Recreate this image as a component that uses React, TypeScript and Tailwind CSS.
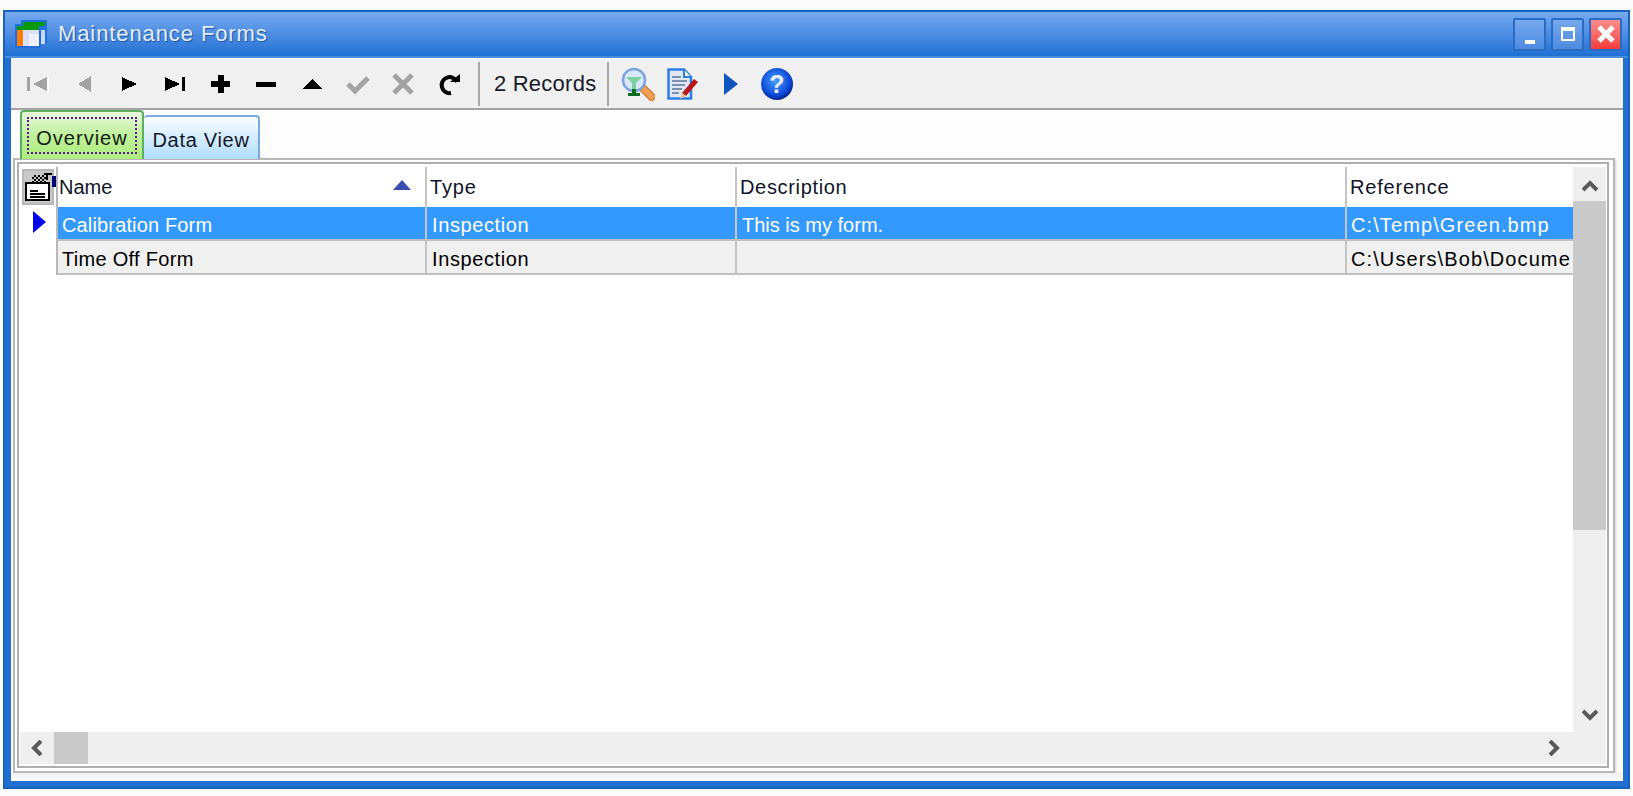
import React from 'react';

const dim = '#a3a3a3';
const ink = '#000000';

const ToolIcon = ({ children }: { children: React.ReactNode }) => (
  <div className="w-[45.7px] h-full flex items-center justify-center flex-shrink-0">
    <svg width="26" height="26" viewBox="0 0 26 26" shapeRendering="crispEdges">{children}</svg>
  </div>
);

const Chevron = ({ dir }: { dir: 'up' | 'down' | 'left' | 'right' }) => {
  const rot = { up: 0, down: 180, left: 270, right: 90 }[dir];
  return (
    <svg width="16" height="14" viewBox="0 0 16 14" style={{ transform: `rotate(${rot}deg)` }}>
      <path d="M1 11 L8 4 L15 11" fill="none" stroke="#5a5a5a" strokeWidth="4" />
    </svg>
  );
};

const rows = [
  {
    name: 'Calibration Form',
    nameCls: 'tracking-[0.15px]',
    type: 'Inspection',
    desc: 'This is my form.',
    ref: 'C:\\Temp\\Green.bmp',
    selected: true,
  },
  {
    name: 'Time Off Form',
    nameCls: 'tracking-[0.3px]',
    type: 'Inspection',
    desc: '',
    ref: 'C:\\Users\\Bob\\Docume',
    selected: false,
  },
];

const gridCols = 'grid grid-cols-[369px_310px_610px_225px]';

// dither cells on the form icon in the grid corner
const dither = [
  [10, 3], [14, 3], [18, 3],
  [8, 5], [12, 5], [16, 5], [20, 5],
  [10, 7], [14, 7], [18, 7],
  [8, 9], [12, 9], [16, 9], [20, 9],
];

export default function App() {
  return (
    <div className="w-[1633px] h-[796px] bg-[#fbfbfb] pt-[10px] pl-[3px] pr-[3px] pb-[7px] overflow-hidden font-['Liberation_Sans',sans-serif]">
      <div className="h-full flex flex-col bg-[#1f6fd3] border-2 border-[#1b62bd]">
        {/* title bar */}
        <div className="h-[46px] flex-shrink-0 flex items-center justify-between bg-gradient-to-b from-[#75a9ef] to-[#1e70d4] pl-[10px] pr-[6px] border-b-[2px] border-[#4a8ce0]">
          <div className="flex items-center gap-[11px]">
            <svg width="32" height="28" viewBox="0 0 32 28" shapeRendering="crispEdges">
              <rect x="6" y="0" width="26" height="24" fill="#1f6fe0" />
              <rect x="0" y="4" width="26" height="24" fill="#1f6fe0" />
              <rect x="8" y="2" width="22" height="4" fill="#0a9a10" />
              <rect x="2" y="6" width="22" height="4" fill="#0a9a10" />
              <rect x="26" y="10" width="4" height="14" fill="#c8d8f8" />
              <rect x="2" y="10" width="6" height="16" fill="#ff7a00" />
              <rect x="8" y="10" width="16" height="16" fill="#d8e0fc" />
              <rect x="14" y="14" width="10" height="12" fill="#eef0ff" />
            </svg>
            <span className="text-[22px] tracking-[0.9px] text-[#e4effd] leading-none [text-shadow:1px_1px_1px_#1a55a8]">Maintenance Forms</span>
          </div>
          <div className="flex items-center gap-[5px]">
            <div className="w-[33px] h-[33px] rounded-[2px] border-2 border-[#2a6cc4] bg-gradient-to-b from-[#75a8ee] to-[#4d8ae0] flex items-end justify-center pb-[5px]">
              <div className="w-[10px] h-[4px] bg-white" />
            </div>
            <div className="w-[33px] h-[33px] rounded-[2px] border-2 border-[#2a6cc4] bg-gradient-to-b from-[#75a8ee] to-[#4d8ae0] flex items-center justify-center">
              <div className="w-[14px] h-[14px] border-2 border-t-[4px] border-white" />
            </div>
            <div className="w-[33px] h-[33px] rounded-[2px] border-2 border-[#2a6cc4] bg-gradient-to-b from-[#fb8d8d] to-[#f43a3a] flex items-center justify-center">
              <svg width="20" height="20" viewBox="0 0 20 20">
                <path d="M3 3 L17 17 M17 3 L3 17" stroke="#fff" strokeWidth="5" />
              </svg>
            </div>
          </div>
        </div>

        {/* client */}
        <div className="flex-1 min-h-0 ml-[6px] mr-[5px] mb-[6px] bg-[#fdfdfd] flex flex-col">
          {/* toolbar */}
          <div className="h-[52px] flex-shrink-0 bg-[#f0f0f0] border-t border-white border-b-[2px] border-b-[#a3a3a3] flex items-center pl-[4px]">
            <ToolIcon>
              <rect x="2" y="6" width="3" height="14" fill={dim} />
              <polygon points="22,6 22,20 8,13" fill={dim} />
              <rect x="22" y="6" width="2" height="15" fill="#fff" />
            </ToolIcon>
            <ToolIcon>
              <polygon points="20,5 20,21 7,13" fill={dim} />
            </ToolIcon>
            <ToolIcon>
              <polygon points="6,6 6,20 21,13" fill={ink} />
            </ToolIcon>
            <ToolIcon>
              <polygon points="3,6 3,20 18,13" fill={ink} />
              <rect x="20" y="6" width="3" height="14" fill={ink} />
            </ToolIcon>
            <ToolIcon>
              <rect x="3" y="10" width="19" height="6" fill={ink} />
              <rect x="10" y="4" width="6" height="18" fill={ink} />
            </ToolIcon>
            <ToolIcon>
              <rect x="3" y="11" width="20" height="5" fill={ink} />
            </ToolIcon>
            <ToolIcon>
              <polygon points="3,18 23,18 13,8" fill={ink} />
            </ToolIcon>
            <ToolIcon>
              <path d="M3 13 L10 20 L23 7" fill="none" stroke={dim} strokeWidth="5" shapeRendering="auto" />
            </ToolIcon>
            <ToolIcon>
              <path d="M4 4 L22 22 M22 4 L4 22" fill="none" stroke={dim} strokeWidth="5" shapeRendering="auto" />
            </ToolIcon>
            <ToolIcon>
              <path d="M21 11 A8 8 0 1 0 15 22" fill="none" stroke={ink} strokeWidth="4" shapeRendering="auto" />
              <polygon points="14,11 24,11 24,3" fill={ink} shapeRendering="auto" />
            </ToolIcon>
            <div className="w-[2px] h-[44px] bg-[#a8a8a8] ml-[6px] flex-shrink-0" />
            <span className="ml-[14px] w-[113px] text-[22px] tracking-[0.25px] leading-none text-[#1a1a2a] whitespace-nowrap">2 Records</span>
            <div className="w-[2px] h-[44px] bg-[#a8a8a8] flex-shrink-0" />
            <svg className="ml-[12px]" width="34" height="34" viewBox="0 0 34 34">
              <rect x="21" y="20" width="7" height="16" transform="rotate(-45 24 24)" fill="#f0a050" stroke="#c06a20" />
              <circle cx="13" cy="13" r="11" fill="#d8e8fb" stroke="#7da4dc" strokeWidth="2.5" />
              <path d="M5 10 H21 L15 16 V24 H11 V16 Z" fill="#7fd0a0" />
              <rect x="7" y="26" width="12" height="3" fill="#0a6a20" />
              <rect x="11" y="22" width="4" height="5" fill="#0a6a20" />
            </svg>
            <svg className="ml-[12px]" width="32" height="32" viewBox="0 0 32 32">
              <path d="M1.5 1.5 H17 L24 9 V30.5 H1.5 Z" fill="#dfe8f6" stroke="#2a7de8" strokeWidth="2.5" />
              <path d="M17 1.5 V9 H24" fill="#fff" stroke="#2a7de8" strokeWidth="2" />
              <path d="M5 9 H14 M5 13 H20 M5 17 H18 M5 21 H15 M5 25 H12" stroke="#7d90b0" strokeWidth="2" />
              <path d="M15 25 L27 11 L31 14 L19 28 Z" fill="#b81818" />
              <path d="M13 31 L15 25 L19 28 Z" fill="#f0c080" />
            </svg>
            <svg className="ml-[24px]" width="16" height="24" viewBox="0 0 16 24">
              <polygon points="1,1 15,12 1,23" fill="#0f55c0" />
            </svg>
            <svg className="ml-[21px]" width="34" height="34" viewBox="0 0 34 34">
              <defs>
                <radialGradient id="helpBall" cx="0.45" cy="0.4" r="0.65">
                  <stop offset="0%" stopColor="#4aa0ff" />
                  <stop offset="70%" stopColor="#0c48d8" />
                  <stop offset="100%" stopColor="#041a70" />
                </radialGradient>
              </defs>
              <circle cx="17" cy="17" r="16" fill="url(#helpBall)" />
              <text x="17" y="26" textAnchor="middle" fontSize="25" fontWeight="700" fill="#e8eefc" fontFamily="Liberation Sans, sans-serif">?</text>
            </svg>
          </div>

          {/* tabs */}
          <div className="h-[49px] flex-shrink-0 flex items-end pl-[9px] relative z-10 -mb-[1px]">
            <div className="w-[124px] h-[49px] rounded-t-[4px] border-2 border-b-0 border-[#5cb25c] bg-gradient-to-b from-[#eaf8de] via-[#bff09a] to-[#aeee7c] p-[5px]">
              <div className="h-full border-2 border-dotted border-[#5a1a90] flex items-center justify-center pt-[5px] text-[20px] tracking-[1px] leading-none text-[#142014]">Overview</div>
            </div>
            <div className="w-[116px] h-[44px] rounded-t-[4px] border-2 border-l-0 border-b-0 border-[#7aa9e2] bg-gradient-to-b from-[#fafdff] to-[#afdcfb] flex items-center justify-center pt-[3px] text-[20px] tracking-[0.7px] leading-none text-[#101828]">Data View</div>
          </div>

          {/* panel */}
          <div className="flex-1 min-h-0 ml-[2px] mr-[8px] border-2 border-[#b8b8b8] bg-white pt-[2px] pl-[2px] pr-[4px] pb-[3px] shadow-[1px_1px_2px_#d0d0d0]">
            <div className="h-full border-2 border-[#adadb2] bg-white flex flex-col pr-[1px] pb-[2px]">
              <div className="flex-1 min-h-0 flex pt-[3px] pl-[3px]">
                {/* row indicators */}
                <div className="w-[34px] flex-shrink-0 flex flex-col items-center pr-[2px]">
                  <div className="mt-[2px] w-[32px] h-[36px] bg-[#c8c8c8] border-[2px] border-[#b8b8b8] flex items-center justify-center relative">
                    <svg width="28" height="30" viewBox="0 0 28 30" shapeRendering="crispEdges">
                      <rect x="2" y="11" width="23" height="17" fill="#fff" stroke="#000" strokeWidth="2" />
                      <path d="M6 19 H14 M6 22 H21 M6 25 H21" stroke="#000" strokeWidth="1.5" />
                      {dither.map(([x, y]) => (
                        <rect key={`${x}-${y}`} x={x} y={y} width="2" height="2" fill="#000" />
                      ))}
                      <rect x="20" y="1" width="8" height="2" fill="#000" />
                      <rect x="22" y="3" width="2" height="5" fill="#000" />
                    </svg>
                    <div className="absolute -right-[4px] top-[5px] w-[4px] h-[11px] bg-[#00007a]" />
                  </div>
                  <svg className="mt-[6px] ml-[2px]" width="13" height="22" viewBox="0 0 13 22">
                    <polygon points="0,0 13,11 0,22" fill="#0000f0" />
                  </svg>
                </div>

                {/* grid */}
                <div className="flex-1 min-w-0 flex flex-col overflow-hidden">
                  <div className="border-l-2 border-[#b8b8b8] overflow-hidden">
                    <div className={`${gridCols} h-[40px] items-center text-[20px] leading-none text-[#10142a]`}>
                      <div className="h-full flex items-center justify-between pl-[1px] pr-[14px] border-r-2 border-[#c4c4c4]">
                        <span>Name</span>
                        <svg className="-mt-[4px]" width="18" height="10" viewBox="0 0 18 10"><polygon points="0,10 18,10 9,0" fill="#3b4db5" /></svg>
                      </div>
                      <div className="h-full flex items-center pl-[3px] tracking-[0.8px] border-r-2 border-[#c4c4c4]">Type</div>
                      <div className="h-full flex items-center pl-[3px] tracking-[0.66px] border-r-2 border-[#c4c4c4]">Description</div>
                      <div className="h-full flex items-center pl-[3px] tracking-[0.8px]">Reference</div>
                    </div>
                    {rows.map((r) => (
                      <div
                        key={r.name}
                        className={`${gridCols} h-[34px] border-b-2 border-[#c0c0c0] text-[20px] leading-none whitespace-nowrap ${r.selected ? 'bg-[#3399ff] text-white' : 'bg-[#f0f0f0] text-black'}`}
                      >
                        <div className={`flex items-center pl-[4px] pt-[3px] border-r-2 border-[#c4c4c4] ${r.nameCls}`}>{r.name}</div>
                        <div className="flex items-center pl-[5px] pt-[3px] tracking-[0.6px] border-r-2 border-[#c4c4c4]">{r.type}</div>
                        <div className="flex items-center pl-[5px] pt-[3px] border-r-2 border-[#c4c4c4]">{r.desc}</div>
                        <div className="flex items-center pl-[4px] pt-[3px] tracking-[1.1px]">{r.ref}</div>
                      </div>
                    ))}
                  </div>
                </div>

                {/* vertical scrollbar */}
                <div className="w-[33px] flex-shrink-0 bg-[#efefef] flex flex-col">
                  <div className="h-[34px] flex items-center justify-center pt-[4px]"><Chevron dir="up" /></div>
                  <div className="h-[329px] bg-[#c9c9c9]" />
                  <div className="flex-1" />
                  <div className="h-[34px] flex items-center justify-center"><Chevron dir="down" /></div>
                </div>
              </div>

              {/* horizontal scrollbar */}
              <div className="h-[32px] flex-shrink-0 ml-[1px] bg-[#efefef] flex items-center">
                <div className="w-[34px] flex items-center justify-center"><Chevron dir="left" /></div>
                <div className="w-[34px] h-full bg-[#c9c9c9]" />
                <div className="flex-1" />
                <div className="w-[34px] mr-[35px] flex items-center justify-center"><Chevron dir="right" /></div>
              </div>
            </div>
          </div>
          <div className="h-[8px] flex-shrink-0 bg-gradient-to-b from-[#f0f0f0] to-[#fdfdfd]" />
        </div>
      </div>
    </div>
  );
}
